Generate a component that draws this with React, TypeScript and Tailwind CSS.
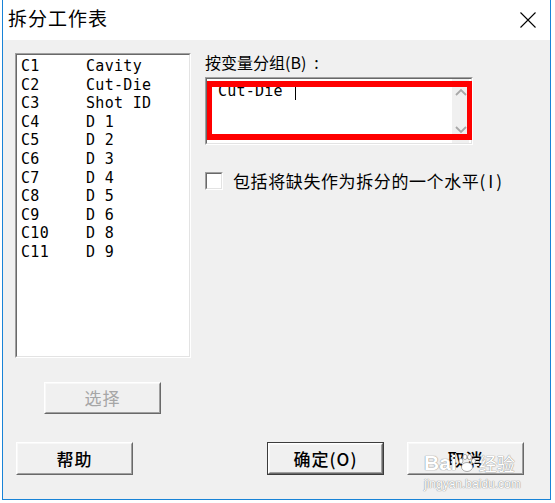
import React from "react";

const rows: [string, string][] = [
  ["C1", "Cavity"],
  ["C2", "Cut-Die"],
  ["C3", "Shot ID"],
  ["C4", "D 1"],
  ["C5", "D 2"],
  ["C6", "D 3"],
  ["C7", "D 4"],
  ["C8", "D 5"],
  ["C9", "D 6"],
  ["C10", "D 8"],
  ["C11", "D 9"],
];

function Btn({
  children,
  isDefault,
  disabled,
  h,
}: {
  children: React.ReactNode;
  isDefault?: boolean;
  disabled?: boolean;
  h: string;
}) {
  const inner = (
    <div className="h-full border border-t-white border-l-white border-b-[#696969] border-r-[#696969]">
      <div
        className={
          "h-full flex items-center justify-center border border-t-[#f8f8f8] border-l-[#f8f8f8] border-b-[#a0a0a0] border-r-[#a0a0a0] text-[17px] tracking-[1px] font-['Noto_Sans_CJK_SC',sans-serif] " +
          (disabled ? "text-[#a6a6a6]" : "text-black font-medium")
        }
      >
        {children}
      </div>
    </div>
  );
  return (
    <div className={"w-[117px] " + h + (isDefault ? " border border-[#3c3c3c]" : "")}>{inner}</div>
  );
}

function Sunken({ className, children }: { className: string; children?: React.ReactNode }) {
  return (
    <div className={"border border-t-[#a0a0a0] border-l-[#a0a0a0] border-b-white border-r-white " + className}>
      <div className="h-full border border-t-[#696969] border-l-[#696969] border-b-[#e3e3e3] border-r-[#e3e3e3] bg-white relative">
        {children}
      </div>
    </div>
  );
}

export default function App() {
  return (
    <div className="relative w-[555px] h-[503px] bg-white overflow-hidden pl-[2px]">
      <div className="w-[549px] h-[500px] flex flex-col border-l border-r border-b border-[#1883d7]">
        {/* title bar */}
        <div className="h-[40px] shrink-0 bg-white flex items-start justify-between pl-[5px] pr-[14px]">
          <div className="mt-[6px] text-[19px] leading-[24px] tracking-[1px] text-black font-['Noto_Sans_CJK_SC',sans-serif]">
            拆分工作表
          </div>
          <svg width="16" height="16" viewBox="0 0 16 16" className="mt-[12px]">
            <path d="M0.5 0.5 L15.5 15.5 M15.5 0.5 L0.5 15.5" stroke="#000" strokeWidth="1.1" fill="none" />
          </svg>
        </div>

        {/* client */}
        <div className="flex-1 bg-[#f0f0f0] flex flex-col pl-[12px] pt-[13px]">
          <div className="flex">
            {/* left column */}
            <div className="w-[176px] flex flex-col">
              <Sunken className="h-[305px]">
                <div className="pl-[4px] pt-[2px] font-['DejaVu_Sans_Mono',monospace] text-[15px] leading-[18.6px] tracking-[0.3px] text-black">
                  {rows.map(([a, b]) => (
                    <div key={a} className="flex whitespace-pre">
                      <span className="w-[65px]">{a}</span>
                      <span>{b}</span>
                    </div>
                  ))}
                </div>
              </Sunken>
              <div className="mt-[24px] ml-[29px]">
                <Btn disabled h="h-[32px]">
                  选择
                </Btn>
              </div>
            </div>

            {/* right column */}
            <div className="ml-[14px] flex flex-col">
              <div className="h-[19px] leading-[19px] text-[16px] text-black font-['Noto_Sans_CJK_SC',sans-serif] whitespace-pre">
                按变量分组(B)<span className="ml-[8px]">:</span>
              </div>
              <div className="relative mt-[5px] w-[268px]">
                <Sunken className="h-[68px]">
                  <div className="flex h-full">
                    <div className="flex-1 pl-[11px] pt-[3px] font-['DejaVu_Sans_Mono',monospace] text-[15px] leading-[18.6px] tracking-[0.2px] text-black flex items-start whitespace-pre">
                      Cut-Die <span className="inline-block w-px h-[15px] bg-black mt-[3px] ml-[3px]" />
                    </div>
                    <div className="w-[17px] mr-[2px] bg-[#f0f0f0] flex flex-col items-center justify-between py-[9px]">
                      <svg width="12" height="8" viewBox="0 0 12 8">
                        <path d="M1 7 L6 2 L11 7" stroke="#a8a8a8" strokeWidth="1.8" fill="none" />
                      </svg>
                      <svg width="12" height="8" viewBox="0 0 12 8">
                        <path d="M1 1 L6 6 L11 1" stroke="#a8a8a8" strokeWidth="1.8" fill="none" />
                      </svg>
                    </div>
                  </div>
                </Sunken>
                <div className="absolute left-[2px] top-[4px] right-[1px] bottom-[5px] border-x-[5px] border-y-[6px] border-[#ff0000]" />
              </div>
              <div className="mt-[26px] flex items-center">
                <Sunken className="w-[18px] h-[18px]" />
                <span className="ml-[10px] text-[17px] leading-[20px] tracking-[0.6px] text-black font-['Noto_Sans_CJK_SC',sans-serif] whitespace-pre">
                  包括将缺失作为拆分的一个水平<span className="tracking-[3px]">(I)</span>
                </span>
              </div>
            </div>
          </div>

          {/* bottom buttons */}
          <div className="mt-[28px] flex pr-[26px]">
            <div className="ml-[1px]">
              <Btn h="h-[33px]">帮助</Btn>
            </div>
            <div className="flex-1" />
            <Btn isDefault h="h-[33px]">
              确定(O)
            </Btn>
            <div className="ml-[23px]">
              <Btn h="h-[33px]">取消</Btn>
            </div>
          </div>
        </div>
      </div>

      {/* watermark */}
      <div className="absolute left-[424px] top-[452px] flex flex-col items-start pointer-events-none text-white [text-shadow:0_0_1px_#8a8a8a,0_0_1px_#8a8a8a]">
        <div className="flex items-end leading-[22px] font-['Liberation_Sans',sans-serif]">
          <span className="text-[21px] font-bold">Bai</span>
          <svg width="20" height="20" viewBox="0 0 20 20" className="mb-[1px]">
            <g fill="#fff" stroke="#9a9a9a" strokeWidth="0.8">
              <ellipse cx="10" cy="14" rx="5.5" ry="4.5" />
              <ellipse cx="4" cy="8" rx="2" ry="2.6" />
              <ellipse cx="8" cy="4" rx="2" ry="2.6" />
              <ellipse cx="12.5" cy="4" rx="2" ry="2.6" />
              <ellipse cx="16.5" cy="8" rx="2" ry="2.6" />
            </g>
          </svg>
          <span className="text-[18px] ml-[2px] font-['Noto_Sans_CJK_SC',sans-serif]">经验</span>
        </div>
        <div className="mt-[3px] text-[12px] leading-[14px] font-['Liberation_Sans',sans-serif]">
          jingyan.baidu.com
        </div>
      </div>
    </div>
  );
}
